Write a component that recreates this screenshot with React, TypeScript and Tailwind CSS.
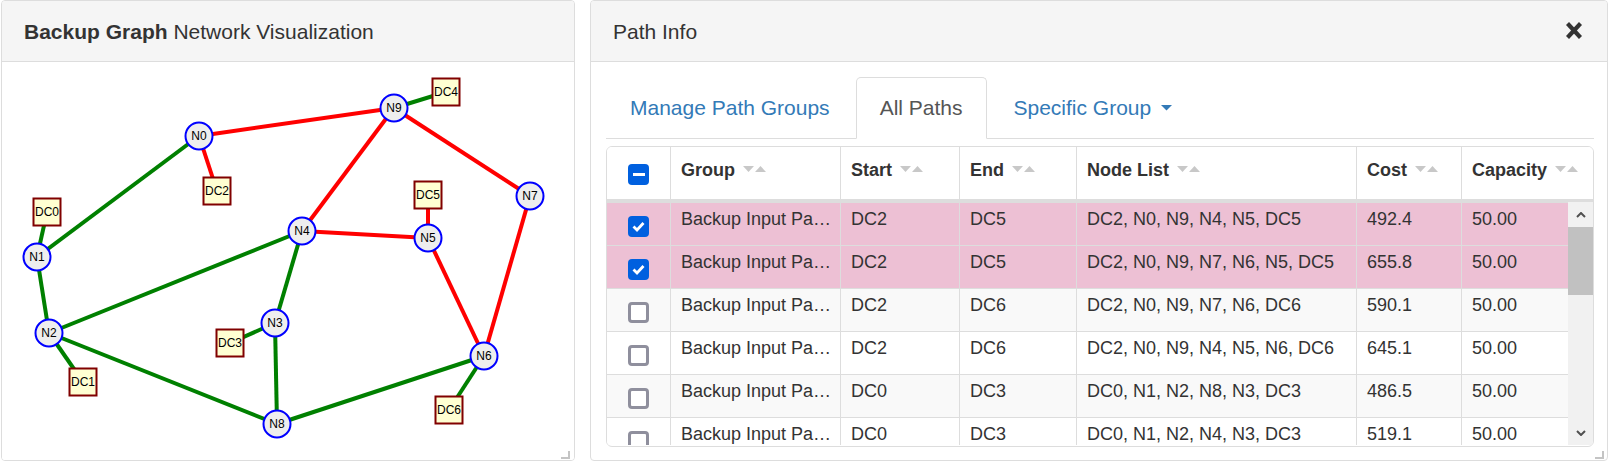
import React from "react";

type Pt = { x: number; y: number };

const nodes: Record<string, Pt> = {
  N0: { x: 199, y: 136 },
  N1: { x: 37, y: 257 },
  N2: { x: 49, y: 333 },
  N3: { x: 275, y: 323 },
  N4: { x: 302, y: 231 },
  N5: { x: 428, y: 238 },
  N6: { x: 484, y: 356 },
  N7: { x: 530, y: 196 },
  N8: { x: 277, y: 424 },
  N9: { x: 394, y: 108 },
};

const dcs: Record<string, Pt> = {
  DC0: { x: 47, y: 212 },
  DC1: { x: 83, y: 382 },
  DC2: { x: 217, y: 191 },
  DC3: { x: 230, y: 343 },
  DC4: { x: 446, y: 92 },
  DC5: { x: 428, y: 195 },
  DC6: { x: 449, y: 410 },
};

const green = [
  ["N0", "N1"], ["N1", "DC0"], ["N1", "N2"], ["N2", "N4"], ["N2", "DC1"], ["N2", "N8"],
  ["N4", "N3"], ["N3", "DC3"], ["N3", "N8"], ["N8", "N6"], ["N6", "DC6"], ["N9", "DC4"],
];
const red = [
  ["N0", "N9"], ["N0", "DC2"], ["N9", "N4"], ["N9", "N7"], ["N4", "N5"], ["N5", "DC5"],
  ["N5", "N6"], ["N7", "N6"],
];

const pos = (id: string) => nodes[id] ?? dcs[id];

const rows = [
  { start: "DC2", end: "DC5", list: "DC2, N0, N9, N4, N5, DC5", cost: "492.4", on: true },
  { start: "DC2", end: "DC5", list: "DC2, N0, N9, N7, N6, N5, DC5", cost: "655.8", on: true },
  { start: "DC2", end: "DC6", list: "DC2, N0, N9, N7, N6, DC6", cost: "590.1", on: false },
  { start: "DC2", end: "DC6", list: "DC2, N0, N9, N4, N5, N6, DC6", cost: "645.1", on: false },
  { start: "DC0", end: "DC3", list: "DC0, N1, N2, N8, N3, DC3", cost: "486.5", on: false },
  { start: "DC0", end: "DC3", list: "DC0, N1, N2, N4, N3, DC3", cost: "519.1", on: false },
];

function SortIcon() {
  return (
    <svg width="23" height="8" viewBox="0 0 23 8" className="mt-[5px] shrink-0">
      <polygon points="0,1 11,1 5.5,7" fill="#c8c8c8" />
      <polygon points="12,7 23,7 17.5,1" fill="#c8c8c8" />
    </svg>
  );
}

function Check({ state }: { state: "on" | "off" | "mixed" }) {
  if (state === "off") {
    return <span className="block w-[21px] h-[21px] rounded-[4px] border-[3px] border-[#8f8f9d] bg-white" />;
  }
  return (
    <span className="flex items-center justify-center w-[21px] h-[21px] rounded-[4px] bg-[#0060df]">
      {state === "mixed" ? (
        <span className="block w-[12px] h-[3px] bg-white" />
      ) : (
        <svg width="13" height="11" viewBox="0 0 13 11">
          <polyline points="1.5,5.5 5,9 11.5,2" fill="none" stroke="#fff" strokeWidth="2.8" />
        </svg>
      )}
    </span>
  );
}

function Graph() {
  return (
    <svg width="572" height="398" viewBox="2 62 572 398">
      {green.map(([a, b], i) => (
        <line key={"g" + i} x1={pos(a).x} y1={pos(a).y} x2={pos(b).x} y2={pos(b).y} stroke="#008000" strokeWidth="4" />
      ))}
      {red.map(([a, b], i) => (
        <line key={"r" + i} x1={pos(a).x} y1={pos(a).y} x2={pos(b).x} y2={pos(b).y} stroke="#ff0000" strokeWidth="4" />
      ))}
      {Object.entries(dcs).map(([id, p]) => (
        <g key={id}>
          <rect x={p.x - 13.5} y={p.y - 13.5} width="27" height="27" fill="#ffffd2" stroke="#800000" strokeWidth="2" />
          <text x={p.x} y={p.y + 4} textAnchor="middle" fontSize="12" fill="#000" fontFamily="'Liberation Sans', Arial, sans-serif">
            {id}
          </text>
        </g>
      ))}
      {Object.entries(nodes).map(([id, p]) => (
        <g key={id}>
          <circle cx={p.x} cy={p.y} r="13.5" fill="#eeeeee" stroke="#0000ff" strokeWidth="2" />
          <text x={p.x} y={p.y + 4} textAnchor="middle" fontSize="12" fill="#000" fontFamily="'Liberation Sans', Arial, sans-serif">
            {id}
          </text>
        </g>
      ))}
    </svg>
  );
}

const cols = "grid grid-cols-[64px_170px_119px_117px_280px_105px_1fr]";

export default function App() {
  return (
    <div className="flex gap-[15px] pl-[1px] bg-white w-[1613px] h-[462px] overflow-hidden font-['Liberation_Sans',Arial,sans-serif] text-[#333]">
      {/* Left panel: graph */}
      <div className="relative w-[574px] h-[461px] shrink-0 border border-[#ddd] rounded-[4px] flex flex-col overflow-hidden">
        <div className="h-[61px] shrink-0 bg-[#f5f5f5] border-b border-[#ddd] flex items-center px-[22px] pt-[2px] text-[21px]">
          <span className="font-bold">Backup Graph</span>&nbsp;Network Visualization
        </div>
        <div className="flex-1 bg-white">
          <Graph />
        </div>
        <div className="absolute right-[4px] bottom-[1px] w-[9px] h-[8px] border-r-2 border-b-2 border-[#c4c4c4]" />
      </div>

      {/* Right panel: path info */}
      <div className="relative w-[1018px] h-[461px] shrink-0 border border-[#ddd] rounded-[4px] flex flex-col overflow-hidden">
        <div className="h-[61px] shrink-0 bg-[#f5f5f5] border-b border-[#ddd] flex items-center justify-between pl-[22px] pr-[25px] pt-[2px] text-[21px]">
          <span>Path Info</span>
          <svg width="16" height="17" viewBox="0 0 16 17" className="mb-[4px]">
            <line x1="1.5" y1="1.5" x2="14.5" y2="15.5" stroke="#333" strokeWidth="4.2" />
            <line x1="14.5" y1="1.5" x2="1.5" y2="15.5" stroke="#333" strokeWidth="4.2" />
          </svg>
        </div>

        <div className="flex-1 pl-[15px] pr-[13px] pt-[15px]">
          {/* tabs */}
          <div className="flex border-b border-[#ddd] h-[62px] text-[21px]">
            <div className="h-[61px] px-[23px] border border-transparent mr-[2px] flex items-center text-[#337ab7]">
              Manage Path Groups
            </div>
            <div className="h-[62px] px-[23px] border border-[#ddd] border-b-white rounded-t-[5px] bg-white mr-[2px] flex items-center text-[#555]">
              All Paths
            </div>
            <div className="h-[61px] px-[24px] border border-transparent flex items-center gap-[10px] text-[#337ab7]">
              Specific Group
              <svg width="11" height="6" viewBox="0 0 11 6">
                <polygon points="0,0 11,0 5.5,5.5" fill="#337ab7" />
              </svg>
            </div>
          </div>

          {/* table */}
          <div className="mt-[7px] h-[301px] border border-[#ddd] rounded-[6px] overflow-hidden text-[18px]">
            <div className={`${cols} h-[55px] border-b-[3px] border-[#ddd] bg-white font-bold`}>
              <div className="border-r border-[#ddd] flex justify-center pt-[17px]">
                <Check state="mixed" />
              </div>
              {["Group", "Start", "End", "Node List", "Cost", "Capacity"].map((h, i) => (
                <div key={h} className={`flex items-start gap-[8px] pl-[10px] pt-[13px] leading-[20px] ${i < 5 ? "border-r border-[#ddd]" : ""}`}>
                  <span>{h}</span>
                  <SortIcon />
                </div>
              ))}
            </div>

            <div className="flex h-[243px] overflow-hidden">
              <div className="flex-1">
                {rows.map((r, i) => (
                  <div
                    key={i}
                    className={`${cols} h-[43px] border-t border-[#ddd] leading-[20px] ${
                      r.on ? "bg-[#edc0d4]" : i % 2 === 0 ? "bg-[#f9f9f9]" : "bg-white"
                    }`}
                  >
                    <div className="border-r border-[#ddd] flex justify-center pt-[13px]">
                      <Check state={r.on ? "on" : "off"} />
                    </div>
                    <div className="border-r border-[#ddd] pl-[10px] pr-[4px] pt-[6px] whitespace-nowrap overflow-hidden">Backup Input Pa…</div>
                    <div className="border-r border-[#ddd] px-[10px] pt-[6px]">{r.start}</div>
                    <div className="border-r border-[#ddd] px-[10px] pt-[6px]">{r.end}</div>
                    <div className="border-r border-[#ddd] px-[10px] pt-[6px] whitespace-nowrap">{r.list}</div>
                    <div className="border-r border-[#ddd] px-[10px] pt-[6px]">{r.cost}</div>
                    <div className="px-[10px] pt-[6px]">50.00</div>
                  </div>
                ))}
              </div>
              {/* scrollbar */}
              <div className="w-[25px] shrink-0 bg-[#f1f1f1] flex flex-col">
                <div className="h-[25px] flex items-center justify-center">
                  <svg width="10" height="6" viewBox="0 0 10 6">
                    <polyline points="1,5 5,1 9,5" fill="none" stroke="#505050" strokeWidth="2" />
                  </svg>
                </div>
                <div className="h-[68px] bg-[#c1c1c1]" />
                <div className="flex-1" />
                <div className="h-[25px] flex items-center justify-center">
                  <svg width="10" height="6" viewBox="0 0 10 6">
                    <polyline points="1,1 5,5 9,1" fill="none" stroke="#505050" strokeWidth="2" />
                  </svg>
                </div>
              </div>
            </div>
          </div>
        </div>
        <div className="absolute right-[3px] bottom-[1px] w-[9px] h-[8px] border-r-2 border-b-2 border-[#c4c4c4]" />
      </div>
    </div>
  );
}
